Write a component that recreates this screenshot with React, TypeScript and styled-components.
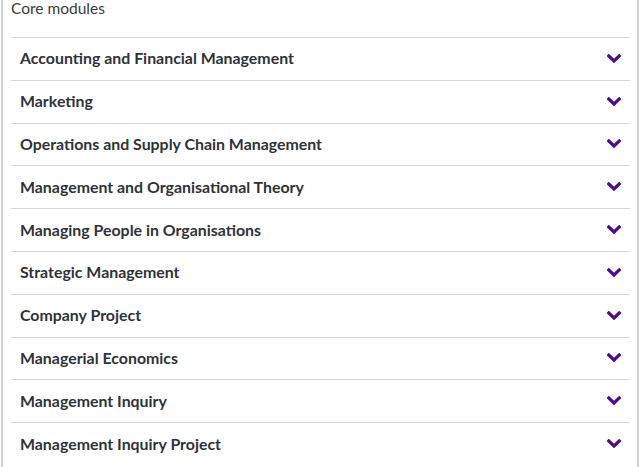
import React from "react";
import styled, { createGlobalStyle } from "styled-components";

const Global = createGlobalStyle`
  html, body { margin: 0; padding: 0; background: #fff; }
  body { font-family: "Lato", "Liberation Sans", sans-serif; }
`;

const Frame = styled.div`
  margin-left: 1px;
  width: 638px;
  height: 467px;
  box-sizing: border-box;
  border-left: 2px solid #d0d0d0;
  border-right: 2px solid #d0d0d0;
  padding: 0 7px 0 8px;
  overflow: hidden;
`;

const Heading = styled.div`
  font-size: 15.5px;
  color: #3a3a3a;
  height: 37px;
  line-height: 17px;
`;

const List = styled.ul`
  list-style: none;
  margin: 0;
  padding: 0;
`;

const Row = styled.li`
  display: flex;
  align-items: center;
  justify-content: space-between;
  height: 41.8px;
  border-top: 1px solid #d6d6d6;
  padding: 0 9px 0 9px;
`;

const Title = styled.span`
  font-weight: 700;
  font-size: 15.9px;
  color: #2f3338;
  margin-bottom: 2px;
`;

const Chevron = () => (
  <svg width="14" height="10" viewBox="0 0 14 10" aria-hidden="true">
    <path d="M1.8 2 L7 7 L12.2 2" fill="none" stroke="#4b0a96" strokeWidth="3.2" strokeLinecap="square" />
  </svg>
);

const modules = [
  "Accounting and Financial Management",
  "Marketing",
  "Operations and Supply Chain Management",
  "Management and Organisational Theory",
  "Managing People in Organisations",
  "Strategic Management",
  "Company Project",
  "Managerial Economics",
  "Management Inquiry",
  "Management Inquiry Project",
];

export default function App() {
  return (
    <>
      <Global />
      <Frame>
        <Heading>Core modules</Heading>
        <List>
          {modules.map((m) => (
            <Row key={m}>
              <Title>{m}</Title>
              <Chevron />
            </Row>
          ))}
        </List>
      </Frame>
    </>
  );
}
